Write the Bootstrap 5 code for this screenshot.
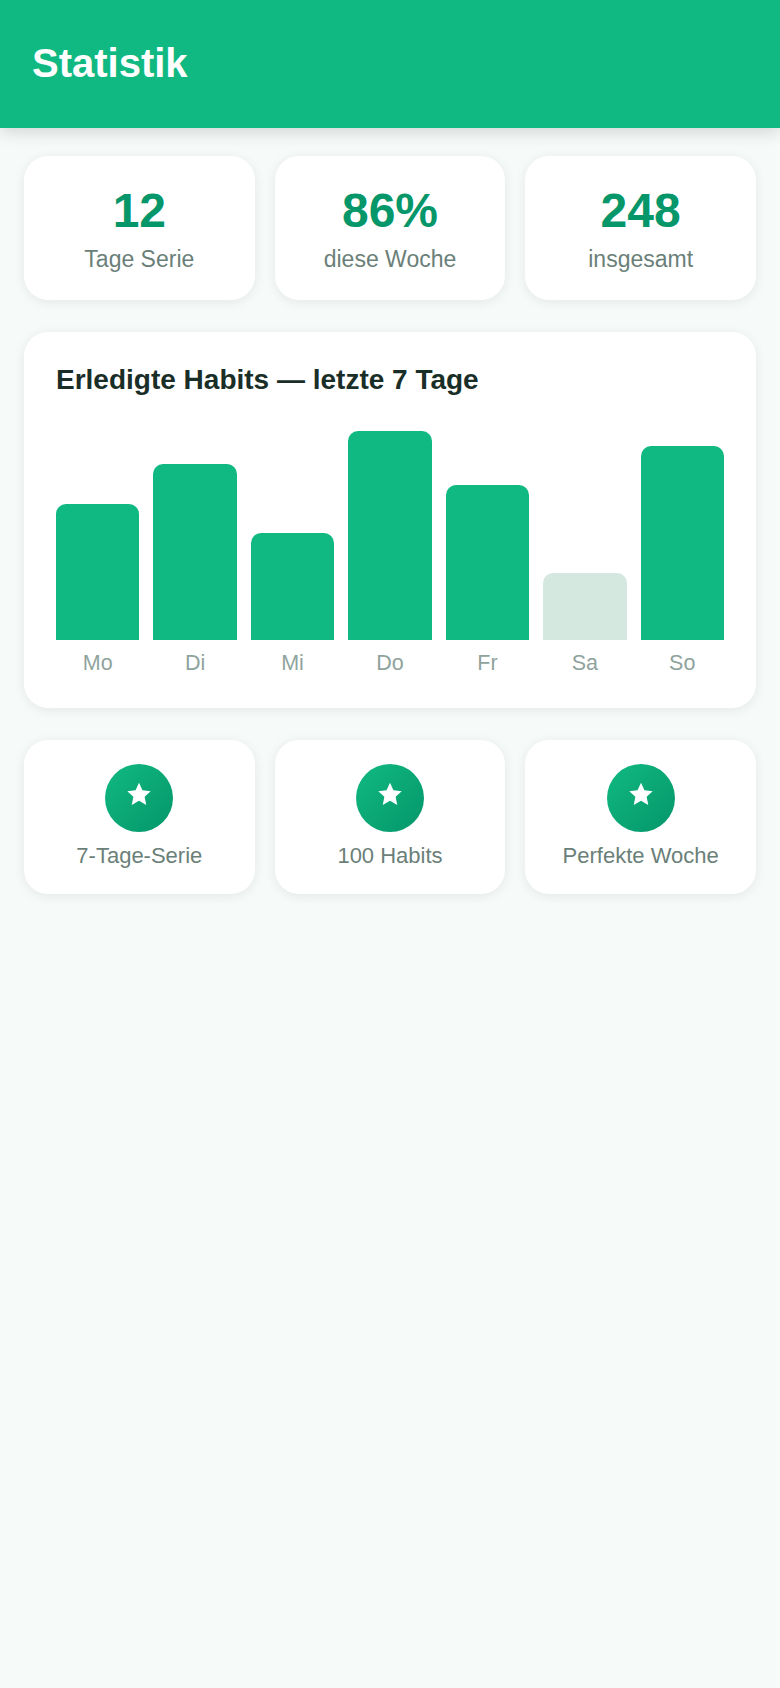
<!DOCTYPE html>
<html lang="de">
<head>
  <meta charset="UTF-8" />
  <meta name="viewport" content="width=device-width, initial-scale=1.0" />
  <title>Statistik</title>
  <link rel="stylesheet" href="https://cdn.jsdelivr.net/npm/bootstrap@5.3.0/dist/css/bootstrap.min.css">
  <script src="https://cdn.jsdelivr.net/npm/bootstrap@5.3.0/dist/js/bootstrap.bundle.min.js"></script>
  <style>
    body { background: #f6faf9; font-family: "Liberation Sans", Arial, sans-serif; }
    .app-head { background: #10b981; height: 128px; padding: 0 32px; box-shadow: 0 4px 16px rgba(0,0,0,.15); position: relative; }
    .app-head h1 { font-size: 40px; font-weight: 700; color: #fff; margin: 0; line-height: 126px; }
    .app-main { padding: 28px 24px; }
    .tile { background: #fff; border-radius: 24px; box-shadow: 0 2px 12px rgba(0,0,0,.08); }
    .three { display: grid; grid-template-columns: repeat(3, 1fr); gap: 20px; }
    .stat { height: 144px; text-align: center; padding-top: 26px; }
    .stat-num { font-size: 48px; line-height: 58px; font-weight: 700; color: #059669; }
    .stat-lbl { font-size: 23px; line-height: 32px; color: #6b7f79; margin-top: 3px; }
    .chart { margin: 32px 0; padding: 31px 32px 28px; height: 376px; }
    .chart h2 { font-size: 28px; line-height: 34px; font-weight: 700; color: #1a2e28; margin: 0 0 34px; }
    .bars { display: flex; gap: 14px; height: 209px; align-items: flex-end; }
    .bar { flex: 1; background: #10b981; border-radius: 10px 10px 0 0; }
    .bar-low { background: #d4e8df; }
    .days { display: flex; gap: 14px; margin-top: 10px; }
    .days span { flex: 1; text-align: center; font-size: 21.500px; line-height: 26px; color: #8fa39d; }
    .award { height: 154px; text-align: center; padding-top: 24px; }
    .award-ico { width: 68px; height: 68px; border-radius: 50%; background: linear-gradient(135deg, #10b981, #059669); margin: 0 auto 10px; }
    .award-ico svg { margin-bottom: 8px; }
    .award-lbl { font-size: 22px; line-height: 28px; color: #6b7f79; }
  </style>
</head>
<body>
  <header class="app-head"><h1>Statistik</h1></header>

  <main class="app-main">
    <div class="three">
      <div class="tile stat"><div class="stat-num">12</div><div class="stat-lbl">Tage Serie</div></div>
      <div class="tile stat"><div class="stat-num">86%</div><div class="stat-lbl">diese Woche</div></div>
      <div class="tile stat"><div class="stat-num">248</div><div class="stat-lbl">insgesamt</div></div>
    </div>

    <section class="tile chart">
      <h2>Erledigte Habits — letzte 7 Tage</h2>
      <div class="bars">
        <div class="bar" style="height: 65%"></div>
        <div class="bar" style="height: 84%"></div>
        <div class="bar" style="height: 51%"></div>
        <div class="bar" style="height: 100%"></div>
        <div class="bar" style="height: 74%"></div>
        <div class="bar bar-low" style="height: 32%"></div>
        <div class="bar" style="height: 93%"></div>
      </div>
      <div class="days">
        <span>Mo</span><span>Di</span><span>Mi</span><span>Do</span><span>Fr</span><span>Sa</span><span>So</span>
      </div>
    </section>

    <div class="three">
      <div class="tile award">
        <div class="award-ico d-flex align-items-center justify-content-center"><svg width="26" height="26" viewBox="0 0 24 24" fill="#fff"><path d="M12 1.5l3.2 7 7.6.9-5.6 5.2 1.5 7.5L12 18.3l-6.7 3.8 1.5-7.5L1.2 9.400l7.6-.9z"/></svg></div>
        <div class="award-lbl">7-Tage-Serie</div>
      </div>
      <div class="tile award">
        <div class="award-ico d-flex align-items-center justify-content-center"><svg width="26" height="26" viewBox="0 0 24 24" fill="#fff"><path d="M12 1.5l3.2 7 7.6.9-5.6 5.2 1.5 7.5L12 18.3l-6.7 3.8 1.5-7.5L1.2 9.400l7.6-.9z"/></svg></div>
        <div class="award-lbl">100 Habits</div>
      </div>
      <div class="tile award">
        <div class="award-ico d-flex align-items-center justify-content-center"><svg width="26" height="26" viewBox="0 0 24 24" fill="#fff"><path d="M12 1.5l3.2 7 7.6.9-5.6 5.2 1.5 7.5L12 18.3l-6.7 3.8 1.5-7.5L1.2 9.400l7.6-.9z"/></svg></div>
        <div class="award-lbl">Perfekte Woche</div>
      </div>
    </div>
  </main>
</body>
</html>
